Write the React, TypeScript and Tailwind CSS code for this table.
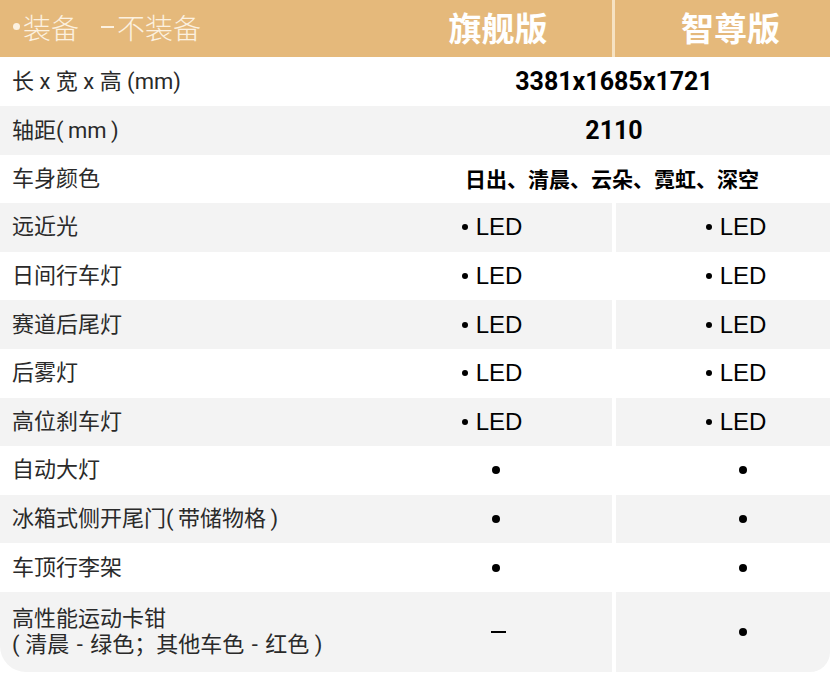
const font = { fontFamily: 'Roboto, "Noto Sans CJK SC", sans-serif' };
const cjk = { fontFamily: '"Noto Sans CJK SC", sans-serif' };

type Val = "dot" | "led" | "none";

interface Row {
  label: string[];
  merged?: string;
  a?: Val;
  b?: Val;
}

const rows: Row[] = [
  { label: ["长 x 宽 x 高 (mm)"], merged: "3381x1685x1721" },
  { label: ["轴距(\u2009mm\u2009)"], merged: "2110" },
  { label: ["车身颜色"], merged: "日出、清晨、云朵、霓虹、深空" },
  { label: ["远近光"], a: "led", b: "led" },
  { label: ["日间行车灯"], a: "led", b: "led" },
  { label: ["赛道后尾灯"], a: "led", b: "led" },
  { label: ["后雾灯"], a: "led", b: "led" },
  { label: ["高位刹车灯"], a: "led", b: "led" },
  { label: ["自动大灯"], a: "dot", b: "dot" },
  { label: ["冰箱式侧开尾门(\u2009带储物格\u2009)"], a: "dot", b: "dot" },
  { label: ["车顶行李架"], a: "dot", b: "dot" },
  {
    label: ["高性能运动卡钳", "(\u2005清晨\u2004-\u2004绿色；其他车色\u2004-\u2004红色\u2005)"],
    a: "none",
    b: "dot",
  },
];

function Cell({ v, right }: { v?: Val; right?: boolean }) {
  if (v === "led")
    return (
      <span
        className={`flex items-center gap-[8px] text-[24px] text-black ${right ? "ml-[26px]" : "mr-[12px]"}`}
        style={{ fontFamily: '"Liberation Sans", sans-serif' }}
      >
        <span className="w-[6px] h-[6px] rounded-full bg-black" />
        LED
      </span>
    );
  if (v === "dot")
    return <span className={`w-[8px] h-[8px] rounded-full bg-black ${right ? "ml-[40px]" : "ml-[-4px]"}`} />;
  return <span className="w-[15px] h-[2px] bg-black" />;
}

export default function App() {
  return (
    <div className="w-[830px] h-[699px] bg-white overflow-hidden" style={font}>
      {/* header */}
      <div className="flex h-[57px] bg-[#e5b97b]">
        <div
          className="flex items-center w-[384px] pl-[13px] pb-[4px] text-[28px] leading-none font-light text-[#fcf1e0]"
          style={cjk}
        >
          <span className="w-[7px] h-[7px] rounded-full bg-[#fcf1e0] mr-[3px]" />
          装备
          <span className="ml-[22px] mr-[3px] w-[13px] h-[2px] bg-[#fcf1e0]" />
          不装备
        </div>
        <div
          className="flex items-center justify-center w-[228px] pb-[3px] text-[33px] leading-none font-bold text-white"
          style={cjk}
        >
          旗舰版
        </div>
        <div className="w-[3px] bg-[#f6e2c2]" />
        <div
          className="flex flex-1 items-center justify-center pl-[16px] pb-[3px] text-[33px] leading-none font-bold text-white"
          style={cjk}
        >
          智尊版
        </div>
      </div>

      {rows.map((r, i) => {
        const gray = i % 2 === 1;
        const bg = gray ? "bg-[#f3f3f3]" : "bg-white";
        const last = i === rows.length - 1;
        const h = last ? "h-[80px]" : i === 0 ? "h-[49px]" : "h-[48.6px]";
        if (r.merged)
          return (
            <div key={i} className={`flex ${h} ${bg}`}>
              <div className="flex items-center w-[384px] pl-[12px] text-[22px] text-[#2a2a2a]">{r.label[0]}</div>
              <div
                className={`flex flex-1 items-center justify-center font-bold text-black ${
                  i === 2 ? "text-[21px] pl-[10px]" : "text-[25px] pl-[14px]"
                }`}
                style={i === 2 ? cjk : { fontFamily: "Roboto, sans-serif" }}
              >
                {r.merged}
              </div>
            </div>
          );
        return (
          <div key={i} className={`flex ${h}`}>
            <div className={`flex w-[612px] ${bg} ${last ? "rounded-bl-[26px]" : ""}`}>
              <div className="flex flex-col justify-center w-[384px] pl-[12px] text-[22px] leading-[26px] text-[#2a2a2a]">
                {r.label.map((l) => (
                  <span key={l}>{l}</span>
                ))}
              </div>
              <div className="flex flex-1 items-center justify-center">
                <Cell v={r.a} />
              </div>
            </div>
            <div className="w-[4px] bg-white" />
            <div className={`flex flex-1 items-center justify-center ${bg} ${last ? "rounded-br-[20px]" : ""}`}>
              <Cell v={r.b} right />
            </div>
          </div>
        );
      })}
    </div>
  );
}
